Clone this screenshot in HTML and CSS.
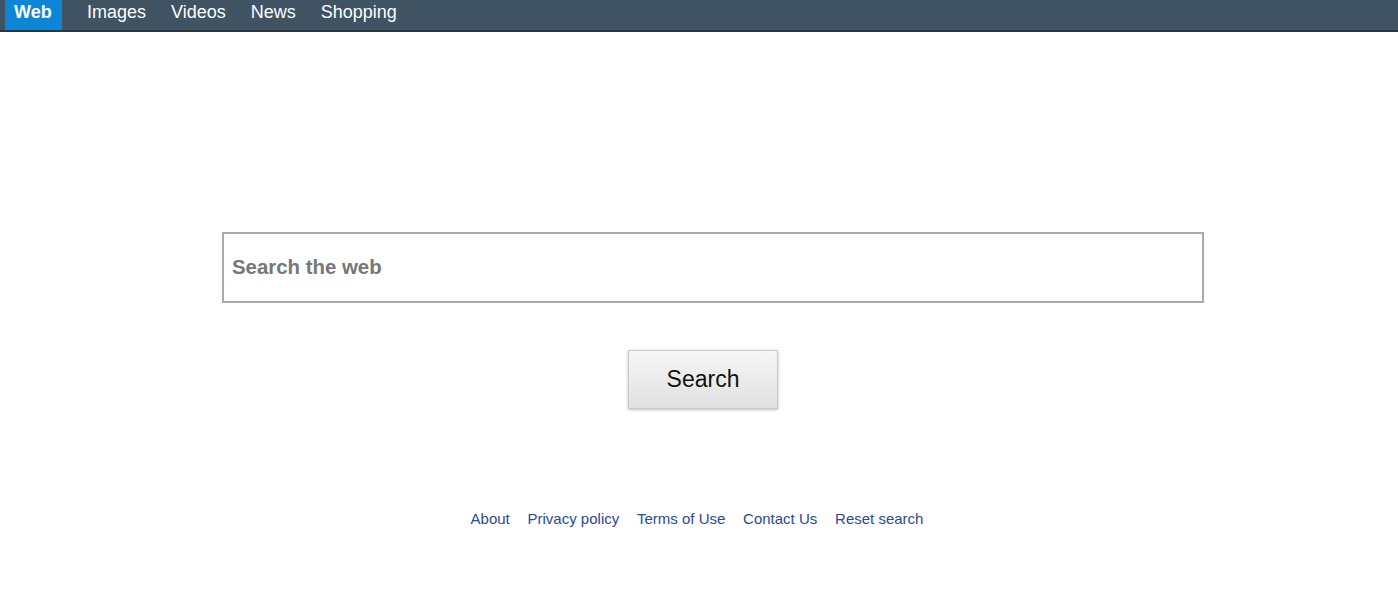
FILE: index.html
```html
<!DOCTYPE html>
<html>
<head>
<meta charset="utf-8">
<link rel="stylesheet" href="styles.css">
</head>
<body>
<nav class="topbar">
  <a class="tab active">Web</a>
  <a class="tab">Images</a>
  <a class="tab">Videos</a>
  <a class="tab">News</a>
  <a class="tab">Shopping</a>
</nav>
<main class="main">
  <form class="search">
    <input class="search-input" type="text" placeholder="Search the web">
    <button class="search-btn" type="button">Search</button>
  </form>
  <footer class="footer">
    <a>About</a>
    <a>Privacy policy</a>
    <a>Terms of Use</a>
    <a>Contact Us</a>
    <a>Reset search</a>
  </footer>
</main>
</body>
</html>
```
FILE: styles.css
```css
html, body { margin: 0; padding: 0; background: #fff; }
body { font-family: "Liberation Sans", Arial, sans-serif; }
.topbar {
  display: flex;
  align-items: stretch;
  height: 30px;
  background: #405363;
  border-bottom: 2px solid #2a3640;
  padding-left: 5px;
}
.tab {
  color: #fff;
  font-size: 18px;
  line-height: 24px;
  padding: 0 12.5px;
  display: flex;
  align-items: flex-start;
}
.tab.active {
  background: #0d86d6;
  font-weight: bold;
  padding: 0 9px 0 9px;
  width: 39px;
  margin-right: 12.5px;
}
.main {
  display: flex;
  flex-direction: column;
  align-items: center;
}
.search {
  margin-top: 200px;
  display: flex;
  flex-direction: column;
  align-items: center;
}
.search-input {
  box-sizing: border-box;
  width: 982px;
  height: 71px;
  margin-left: 28px;
  border: 2px solid #aaa;
  padding: 0 8px;
  font-family: "Liberation Sans", Arial, sans-serif;
  font-size: 20.4px;
  font-weight: bold;
  color: #333;
  outline: none;
}
.search-input::placeholder { color: #777; }
.search-btn {
  margin-top: 47px;
  margin-left: 8px;
  width: 150px;
  height: 59px;
  border: 1px solid #c8c8c8;
  background: linear-gradient(#f6f6f6, #e0e0e0);
  box-shadow: 0 1px 3px rgba(0,0,0,0.25);
  font-family: "Liberation Sans", Arial, sans-serif;
  font-size: 23px;
  color: #111;
  padding: 0;
}
.footer {
  margin-top: 101px;
  margin-right: 4px;
  display: flex;
  gap: 17.75px;
  font-size: 15px;
}
.footer a { color: #2c4a8c; }
```
